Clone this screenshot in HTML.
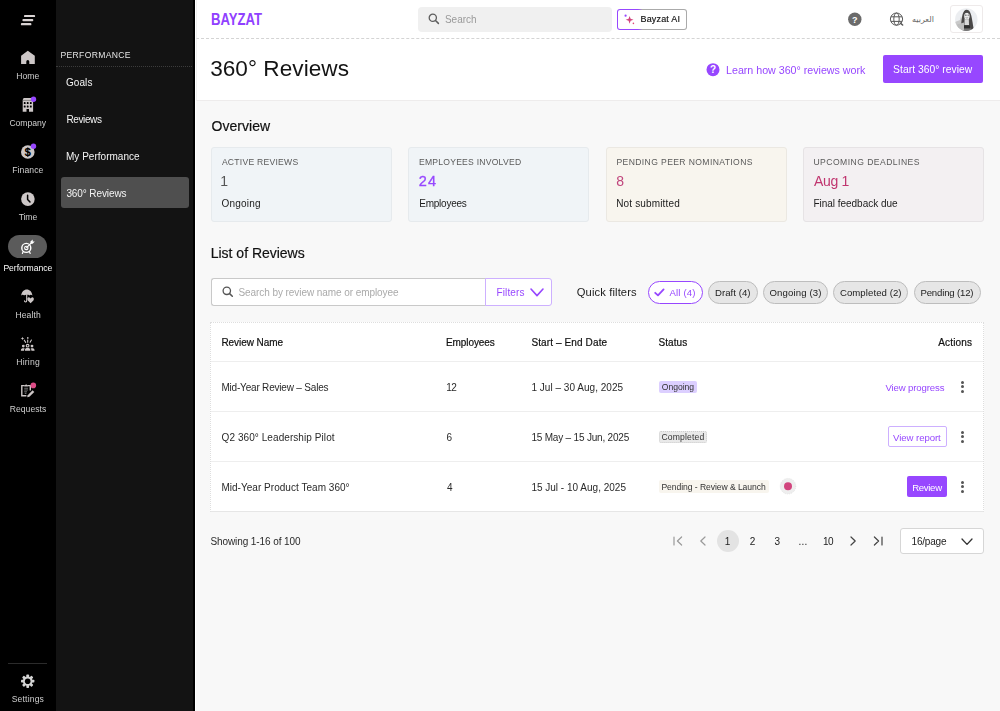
<!DOCTYPE html>
<html lang="en">
<head>
<meta charset="utf-8">
<title>360° Reviews</title>
<style>
*{box-sizing:border-box;margin:0;padding:0}
html,body{width:1000px;height:711px;overflow:hidden;background:#fff}
body{font-family:"Liberation Sans","DejaVu Sans",sans-serif;color:#1c1c1c;position:relative;font-size:10px}
.t{position:absolute;white-space:nowrap;line-height:1}
.b{position:absolute}
#txt{position:absolute;left:0;top:0;width:1000px;height:711px;will-change:transform}
svg{display:block;position:absolute;overflow:visible}
#rail{position:absolute;left:0;top:0;width:56px;height:711px;background:#000}
#pill{position:absolute;left:8px;top:235px;width:39px;height:23px;border-radius:12px;background:#5b5b5b}
#sub{position:absolute;left:56px;top:0;width:138px;height:711px;background:#131313}
#sub .dl{position:absolute;left:0;top:66px;width:138px;border-top:1px dotted #3c3c3c}
#sub .sel{position:absolute;left:5px;top:177px;width:128px;height:31px;background:#4f4f4f;border-radius:3px}
#shadow{position:absolute;left:193px;top:0;width:1.5px;height:711px;background:#000}
#content{position:absolute;left:196px;top:101px;width:804px;height:610px;background:#f8f8f8}
#top{position:absolute;left:196px;top:0;width:804px;height:39px;background:#fff;border-bottom:1px dashed #d4d4d4;border-left:1px solid #f0f0f0}
#hdr{position:absolute;left:196px;top:39px;width:804px;height:62px;background:#fff;border-bottom:1px solid #eeecec;border-left:1px solid #f0f0f0}
#gsearch{position:absolute;left:418px;top:7px;width:194px;height:25px;background:#f0f0f0;border-radius:4px}
#ai{position:absolute;left:617px;top:9px;width:70px;height:21px;border-radius:3px;background:linear-gradient(90deg,#9747ff 0,#9747ff 30%,#aaa 36%,#aaa 100%)}
#ai i{position:absolute;left:1px;top:1px;right:1px;bottom:1px;background:#fff;border-radius:2px}
#avatar{position:absolute;left:950px;top:5px;width:33px;height:28px;border:1px solid #eeeaea;border-radius:3px;background:#fff}
#startbtn{position:absolute;left:883px;top:55px;width:100px;height:28px;background:#9747ff;border-radius:2px}
.card{position:absolute;top:147px;width:181px;height:75px;border:1px solid #e6eaed;border-radius:3px;background:#f0f4f7}
#lsearch{position:absolute;left:211px;top:278px;width:275px;height:28px;border:1px solid #c9c9c9;border-right:none;border-radius:3px 0 0 3px;background:#fff}
#filters{position:absolute;left:485px;top:278px;width:67px;height:28px;border:1px solid #cdb0ff;border-radius:0 3px 3px 0;background:#fff}
.chip{position:absolute;top:281px;height:23px;border-radius:12px;border:1px solid #bdbdbd;background:#e6e6e6}
.chip.on{border-color:#9747ff;background:#fff}
#tbl{position:absolute;left:210px;top:322px;width:774px;height:190px;background:#fff;border:1px dotted #dedede;border-bottom:1px solid #e6e6e6}
#tbl .hl{position:absolute;left:0;width:772px;height:1px;background:#eeeeee}
.badge{position:absolute;border-radius:2px}
.kebab{position:absolute;left:961px;width:3px;height:13px;margin-top:-.5px}
.kebab i{position:absolute;left:-.1px;width:3.2px;height:3.2px;border-radius:50%;background:#555}
#psel{position:absolute;left:900px;top:528px;width:84px;height:26px;border:1px solid #d6d6d6;border-radius:3px;background:#fff}
</style>
</head>
<body>
<!-- ICON RAIL -->
<div id="rail">
  <div id="pill"></div>
  <svg style="left:0;top:0" width="56" height="711" viewBox="0 0 56 711">
    <g fill="#dad4d4"><rect x="24" y="14.9" width="11.1" height="2.2" rx=".9"/><rect x="22.4" y="19" width="10.9" height="2.2" rx=".9"/><rect x="20.9" y="23" width="10.5" height="2.3" rx=".9"/></g>
    <path d="M27.8 50.8L34.8 55.7V64.1H29.3V61.6Q29.3 60 27.8 60Q26.3 60 26.3 61.6V64.1H21.1V55.7Z" fill="#cdc7c7"/>
    <g><path d="M23.6 98H31.9L33.1 100V111.7H22.7V100Z" fill="#cdc7c7"/><path d="M22.7 100.4H33.1" stroke="#444" stroke-width=".5"/><g fill="#000"><rect x="23.8" y="102.1" width="1.8" height="2" rx=".6"/><rect x="26.8" y="102.1" width="1.8" height="2" rx=".6"/><rect x="29.9" y="102.1" width="1.8" height="2" rx=".6"/><rect x="23.8" y="105.5" width="1.8" height="2" rx=".6"/><rect x="26.8" y="105.5" width="1.8" height="2" rx=".6"/><rect x="29.9" y="105.5" width="1.8" height="2" rx=".6"/><rect x="26.5" y="109" width="2.5" height="3"/></g></g>
    <circle cx="33.5" cy="99.3" r="2.7" fill="#9747ff"/>
    <circle cx="27.8" cy="152" r="6.8" fill="#cdc7c7"/>
    <text x="27.8" y="156.2" font-size="11.5" font-weight="bold" text-anchor="middle" fill="#000" font-family="Liberation Sans, sans-serif">$</text>
    <path d="M27.8 147.3V156.7" stroke="#000" stroke-width=".9"/>
    <circle cx="33.5" cy="146.3" r="2.7" fill="#9747ff"/>
    <circle cx="27.9" cy="199.1" r="6.8" fill="#cdc7c7"/>
    <path d="M27.6 195.2V199.4L30 202" fill="none" stroke="#000" stroke-width="1.5" stroke-linecap="round" stroke-linejoin="round"/>
    <g fill="none" stroke="#fff"><circle cx="26.3" cy="247.9" r="4.5" stroke-width="1.4"/><circle cx="26.3" cy="247.9" r="1.7" stroke-width="1.1"/><path d="M26.3 247.9L31.6 242.6" stroke-width="1.2"/><path d="M23.2 251.6L22.4 253.4M29.4 251.6L30.2 253.4" stroke-width="1.2" stroke-linecap="round"/></g>
    <path d="M30.4 241.6L32.8 239.4L32.7 241.5L34.8 241.4L32.6 243.8L30.6 243.7Z" fill="#fff"/>
    <g><path d="M21.2 295.4C21.6 291.6 24 289.4 26.8 289.4C29.6 289.4 32 291.6 32.4 295.4C31.4 294.6 30.2 294.6 29.4 295.4C28.6 294.6 25 294.6 24.2 295.4C23.4 294.6 22.2 294.6 21.2 295.4Z" fill="#cdc7c7"/><path d="M26.7 294.5V300.6C26.7 302.4 24.5 302.4 24.5 300.8" fill="none" stroke="#cdc7c7" stroke-width="1.1" stroke-linecap="round"/><path d="M30.6 303.2L27.8 300.4C26.6 299 27.8 297 29.4 297.4C30 297.6 30.4 298 30.6 298.4C30.8 298 31.2 297.6 31.8 297.4C33.4 297 34.6 299 33.4 300.4Z" fill="#cdc7c7"/></g>
    <g fill="#cdc7c7"><circle cx="27.6" cy="345.7" r="1.9"/><path d="M24.9 350.8V349.9C24.9 348.6 26 348 27.6 348C29.2 348 30.3 348.6 30.3 349.9V350.8Z"/><circle cx="23.3" cy="346.1" r="1.4"/><path d="M20.9 350.8V350.2C20.9 348.9 21.9 348.3 23.3 348.3C23.9 348.3 24.4 348.4 24.8 348.7C24.2 349.1 24 349.6 24 350.2V350.8Z"/><circle cx="32" cy="346.1" r="1.4"/><path d="M34.5 350.8V350.2C34.5 348.9 33.5 348.3 32.1 348.3C31.5 348.3 31 348.4 30.6 348.7C31.2 349.1 31.4 349.6 31.4 350.2V350.8Z"/><path d="M22.5 336.7L23 338L24.3 338.5L23 339L22.5 340.3L22 339L20.7 338.5L22 338Z"/><rect x="27" y="337.2" width="1.5" height="1.5"/></g>
    <circle cx="27.6" cy="345.7" r=".8" fill="#000"/>
    <g stroke="#cdc7c7" stroke-width="1.1" stroke-linecap="round"><path d="M27.7 340V342.2"/><path d="M31.4 340L30.1 342.2"/><path d="M24.3 340.2L25.7 342.4"/></g>
    <g><path d="M24.6 385.6H21.8V395.7H26.4M27.6 385.6H30.3V390.4" fill="none" stroke="#cdc7c7" stroke-width="1.4"/><path d="M24.4 386.4V384.9H25.4L26.1 384.1L26.8 384.9H27.8V386.4Z" fill="#cdc7c7"/><path d="M24.2 388.2H28M24.2 390H28M24.2 391.8H27M24.8 393.4H26.4" stroke="#6e6e6e" stroke-width="1.1"/><path d="M27.2 397.2L27.7 395.2L32.6 390.3L34.3 392L29.4 396.8Z" fill="#cdc7c7"/></g>
    <circle cx="33.3" cy="385.4" r="2.8" fill="#dd4b86"/>
    <rect x="8" y="663" width="39" height="1" fill="#2b2b2b"/>
    <g transform="translate(27.7 681.2)"><g fill="#d4d4d4"><rect x="-1.35" y="-6.7" width="2.7" height="13.4" rx=".7"/><rect x="-1.35" y="-6.7" width="2.7" height="13.4" rx=".7" transform="rotate(45)"/><rect x="-1.35" y="-6.7" width="2.7" height="13.4" rx=".7" transform="rotate(90)"/><rect x="-1.35" y="-6.7" width="2.7" height="13.4" rx=".7" transform="rotate(135)"/><circle r="4.8"/></g><circle r="2.8" fill="#000"/></g>
  </svg>
</div>
<!-- SUB NAV -->
<div id="sub"><div class="dl"></div><div class="sel"></div></div>
<div id="shadow"></div>
<div id="content"></div>
<!-- TOP BAR -->
<div id="top"></div>
<svg style="left:211px;top:13px" width="52" height="13" viewBox="0 0 52 13"><text x="0" y="11.9" font-family="Liberation Sans, sans-serif" font-weight="bold" font-size="16" fill="#9040ff" textLength="51" lengthAdjust="spacingAndGlyphs">BAYZAT</text></svg>
<div id="gsearch"></div>
<svg style="left:428px;top:13px" width="12" height="12" viewBox="0 0 12 12"><circle cx="4.8" cy="4.8" r="3.6" fill="none" stroke="#5e5e5e" stroke-width="1.3"/><path d="M7.5 7.5L10.4 10.4" stroke="#5e5e5e" stroke-width="1.5" stroke-linecap="round"/></svg>
<div id="ai"><i></i></div>
<svg style="left:624px;top:13px" width="12" height="12" viewBox="0 0 12 12"><path d="M5.6 2.9L6.6 5.8L9.5 6.8L6.6 7.8L5.6 10.7L4.6 7.8L1.7 6.8L4.6 5.8Z" fill="#d1457e"/><circle cx="1.6" cy="2.7" r="1.1" fill="#9747ff"/><circle cx="9.4" cy="10.4" r=".8" fill="#e0457b"/></svg>
<svg style="left:848px;top:12px" width="14" height="14" viewBox="0 0 14 14"><circle cx="6.8" cy="7.2" r="6.7" fill="#6a6a6a"/><text x="6.8" y="10.5" font-size="9" font-weight="bold" text-anchor="middle" fill="#fff" font-family="Liberation Sans, sans-serif">?</text></svg>
<svg style="left:889px;top:12px" width="16" height="16" viewBox="0 0 16 16"><g fill="none" stroke="#585858" stroke-width="1"><circle cx="7.5" cy="7.1" r="6.1"/><ellipse cx="7.5" cy="7.1" rx="2.7" ry="6.1"/><path d="M2 4.8H13M2 9.4H13"/></g><path d="M11.4 11.2L13.6 13" stroke="#585858" stroke-width="1.6" stroke-linecap="round"/></svg>
<div class="t" style="left:912px;top:14.5px;font-size:8px;color:#666;font-family:'DejaVu Sans',sans-serif;line-height:10px" dir="rtl" lang="ar">العربيه</div>
<div id="avatar"></div>
<svg style="left:955px;top:8px" width="23" height="23" viewBox="0 0 23 23"><defs><clipPath id="ac"><circle cx="11.3" cy="11.5" r="11.2"/></clipPath></defs><g clip-path="url(#ac)"><rect width="23" height="23" fill="#eceef1"/><path d="M0 14L5 12L6 8L7 13L9 12V23H0Z" fill="#c9c9c9"/><path d="M6.2 17C6.6 9 7.8 1.8 11.6 1.8C15.6 1.8 16.6 8 17.6 14.5C18 17.6 18.6 20 19 23H7Z" fill="#4a4848"/><ellipse cx="11.9" cy="8.2" rx="2.7" ry="3.6" fill="#ececec"/><path d="M9.6 10.5C10.4 12 13.2 12 13.8 10.4L14 17H9.4Z" fill="#d9d9d9"/><path d="M9.2 7C9.8 4.4 12.6 3.6 14.6 6.6C14 4 13 3 11.6 3C10 3 9.4 5 9.2 7Z" fill="#4a4848"/><rect x="10.2" y="6.6" width="1.3" height="1.2" rx=".5" fill="#444"/><rect x="12.6" y="6.6" width="1.2" height="1.2" rx=".5" fill="#555"/><path d="M10.6 9.6Q12 10.6 13.2 9.5" stroke="#777" stroke-width=".6" fill="none"/><path d="M8.4 17.6H15V20.4H8.4Z" fill="#2e2e2e"/><path d="M7.5 20.4H16V23H7.5Z" fill="#777"/><path d="M2 16.5L9 14.5V23H3Z" fill="#bdbdbd"/></g></svg>
<!-- HEADER -->
<div id="hdr"></div>
<svg style="left:706px;top:63px" width="14" height="14" viewBox="0 0 14 14"><circle cx="7" cy="6.7" r="6.5" fill="#9747ff"/><text x="7" y="10.3" font-size="10" font-weight="bold" text-anchor="middle" fill="#fff" font-family="Liberation Sans, sans-serif">?</text></svg>
<div id="startbtn"></div>
<!-- OVERVIEW -->
<div class="card" style="left:211px"></div>
<div class="card" style="left:408px"></div>
<div class="card" style="left:606px;background:#f8f5ee;border-color:#ebe8e2"></div>
<div class="card" style="left:803px;background:#f3f0f2;border-color:#e6e3e5"></div>
<!-- LIST -->
<div id="lsearch"></div>
<svg style="left:222px;top:286px" width="12" height="12" viewBox="0 0 12 12"><circle cx="4.8" cy="4.8" r="3.7" fill="none" stroke="#555" stroke-width="1.3"/><path d="M7.6 7.6L10.3 10.3" stroke="#555" stroke-width="1.5" stroke-linecap="round"/></svg>
<div id="filters"></div>
<svg style="left:530px;top:288px" width="14" height="9" viewBox="0 0 14 9"><path d="M1 1L7 7.6L13 1" fill="none" stroke="#9747ff" stroke-width="1.6" stroke-linecap="round" stroke-linejoin="round"/></svg>
<div class="chip on" style="left:648px;width:55px"></div>
<svg style="left:654px;top:288px" width="11" height="9" viewBox="0 0 11 9"><path d="M1.2 4.8L4 7.4L9.6 1.4" fill="none" stroke="#9747ff" stroke-width="1.8" stroke-linecap="round" stroke-linejoin="round"/></svg>
<div class="chip" style="left:708px;width:50px"></div>
<div class="chip" style="left:763px;width:65px"></div>
<div class="chip" style="left:833px;width:75px"></div>
<div class="chip" style="left:914px;width:67px"></div>
<!-- TABLE -->
<div id="tbl"><div class="hl" style="top:38px"></div><div class="hl" style="top:88px"></div><div class="hl" style="top:138px"></div></div>
<div class="badge" style="left:659px;top:381px;width:38px;height:12px;background:#dccfff"></div>
<div class="kebab" style="top:381px"><i style="top:0"></i><i style="top:4.5px"></i><i style="top:9px"></i></div>
<div class="badge" style="left:659px;top:431px;width:48px;height:12px;background:#e9e9e9;border:1px dotted #cfcfcf"></div>
<div class="b" style="left:888px;top:426px;width:59px;height:21px;border:1px solid #cdb0ff;border-radius:2px;background:#fff"></div>
<div class="kebab" style="top:431px"><i style="top:0"></i><i style="top:4.5px"></i><i style="top:9px"></i></div>
<div class="badge" style="left:659px;top:480px;width:110px;height:13px;background:#f8f5ee"></div>
<svg style="left:780px;top:478px" width="16" height="16" viewBox="0 0 16 16"><circle cx="8" cy="8.2" r="7.8" fill="#eeeeee" stroke="#d8d8d8" stroke-width=".6" stroke-dasharray="1 1"/><circle cx="8" cy="8.2" r="4" fill="#d1457e"/></svg>
<div class="b" style="left:907px;top:476px;width:40px;height:21px;border-radius:2px;background:#9747ff"></div>
<div class="kebab" style="top:481px"><i style="top:0"></i><i style="top:4.5px"></i><i style="top:9px"></i></div>
<!-- PAGINATION -->
<svg style="left:673px;top:536px" width="10" height="10" viewBox="0 0 10 10"><path d="M1 1V9M8.6 1L4.4 5L8.6 9" fill="none" stroke="#9a9a9a" stroke-width="1.2" stroke-linecap="round" stroke-linejoin="round"/></svg>
<svg style="left:699px;top:536px" width="8" height="10" viewBox="0 0 8 10"><path d="M6 1L1.8 5L6 9" fill="none" stroke="#9a9a9a" stroke-width="1.2" stroke-linecap="round" stroke-linejoin="round"/></svg>
<div class="b" style="left:717px;top:530px;width:22px;height:22px;border-radius:50%;background:#e3e3e3"></div>
<svg style="left:849px;top:536px" width="8" height="10" viewBox="0 0 8 10"><path d="M2 1L6.2 5L2 9" fill="none" stroke="#444" stroke-width="1.2" stroke-linecap="round" stroke-linejoin="round"/></svg>
<svg style="left:873px;top:536px" width="10" height="10" viewBox="0 0 10 10"><path d="M9 1V9M1.4 1L5.6 5L1.4 9" fill="none" stroke="#444" stroke-width="1.2" stroke-linecap="round" stroke-linejoin="round"/></svg>
<div id="psel"></div>
<svg style="left:961px;top:538px" width="12" height="8" viewBox="0 0 12 8"><path d="M1 1L6 6.4L11 1" fill="none" stroke="#333" stroke-width="1.3" stroke-linecap="round" stroke-linejoin="round"/></svg>
<!-- TEXT LAYER -->
<div id="txt">
<div class="t" id="r1" style="left:16.18px;top:72.32px;font-size:8.6px;letter-spacing:0.098px;color:#cfcfcf">Home</div>
<div class="t" id="r2" style="left:9.38px;top:119.32px;font-size:8.6px;letter-spacing:-0.025px;color:#cfcfcf">Company</div>
<div class="t" id="r3" style="left:12.28px;top:166.32px;font-size:8.6px;letter-spacing:0.092px;color:#cfcfcf">Finance</div>
<div class="t" id="r4" style="left:18.68px;top:213.32px;font-size:8.6px;letter-spacing:-0.083px;color:#cfcfcf">Time</div>
<div class="t" id="r5" style="left:3.38px;top:263.72px;font-size:8.6px;letter-spacing:-0.037px;color:#fff">Performance</div>
<div class="t" id="r6" style="left:15.38px;top:311.22px;font-size:8.6px;letter-spacing:0.098px;color:#cfcfcf">Health</div>
<div class="t" id="r7" style="left:16.28px;top:358.22px;font-size:8.6px;letter-spacing:0.196px;color:#cfcfcf">Hiring</div>
<div class="t" id="r8" style="left:9.68px;top:405.22px;font-size:8.6px;letter-spacing:0.046px;color:#cfcfcf">Requests</div>
<div class="t" id="r9" style="left:11.68px;top:695.22px;font-size:8.6px;letter-spacing:0.167px;color:#cfcfcf">Settings</div>
<div class="t" id="s0" style="left:60.48px;top:51.22px;font-size:8.6px;letter-spacing:0.317px;color:#e4e4e4">PERFORMANCE</div>
<div class="t" id="s1" style="left:66.00px;top:78.44px;font-size:10px;letter-spacing:0.069px;color:#f4f4f4">Goals</div>
<div class="t" id="s2" style="left:66.48px;top:115.13px;font-size:10px;letter-spacing:-0.383px;color:#f4f4f4">Reviews</div>
<div class="t" id="s3" style="left:66.00px;top:151.84px;font-size:10px;letter-spacing:0.019px;color:#f4f4f4">My Performance</div>
<div class="t" id="s4" style="left:66.40px;top:188.53px;font-size:10px;letter-spacing:-0.099px;color:#f4f4f4">360° Reviews</div>
<div class="t" id="g1" style="left:444.90px;top:15.23px;font-size:10px;letter-spacing:0.002px;color:#9a9a9a">Search</div>
<div class="t" id="g2" style="left:640.46px;top:14.98px;font-size:9px;letter-spacing:0.181px;color:#111;-webkit-text-stroke:.15px #111">Bayzat AI</div>
<div class="t" id="h1" style="left:210.14px;top:57.87px;font-size:22.6px;letter-spacing:0.039px;color:#141414">360° Reviews</div>
<div class="t" id="h2" style="left:726.06px;top:64.64px;font-size:10.7px;letter-spacing:-0.017px;color:#9747ff">Learn how 360° reviews work</div>
<div class="t" id="h3" style="left:893.08px;top:65.08px;font-size:10.3px;letter-spacing:0.044px;color:#fff">Start 360° review</div>
<div class="t" id="o0" style="left:211.48px;top:119.15px;font-size:14px;letter-spacing:0.059px;color:#111;-webkit-text-stroke:.2px #111">Overview</div>
<div class="t" id="c1k" style="left:221.88px;top:158.22px;font-size:8.6px;letter-spacing:0.251px;color:#5a5a5a">ACTIVE REVIEWS</div>
<div class="t" id="c1v" style="left:220.16px;top:174.25px;font-size:14px;letter-spacing:0.000px;color:#555">1</div>
<div class="t" id="c1s" style="left:221.40px;top:198.63px;font-size:10px;letter-spacing:0.231px;color:#1c1c1c">Ongoing</div>
<div class="t" id="c2k" style="left:418.98px;top:158.22px;font-size:8.6px;letter-spacing:0.229px;color:#5a5a5a">EMPLOYEES INVOLVED</div>
<div class="t" id="c2v" style="left:418.63px;top:173.83px;font-size:14.5px;letter-spacing:1.199px;color:#9747ff;-webkit-text-stroke:.3px #9747ff">24</div>
<div class="t" id="c2s" style="left:419.30px;top:198.63px;font-size:10px;letter-spacing:-0.246px;color:#1c1c1c">Employees</div>
<div class="t" id="c3k" style="left:616.48px;top:158.22px;font-size:8.6px;letter-spacing:0.378px;color:#5a5a5a">PENDING PEER NOMINATIONS</div>
<div class="t" id="c3v" style="left:616.16px;top:174.25px;font-size:14px;letter-spacing:0.000px;color:#c0457c">8</div>
<div class="t" id="c3s" style="left:616.20px;top:198.63px;font-size:10px;letter-spacing:0.158px;color:#1c1c1c">Not submitted</div>
<div class="t" id="c4k" style="left:813.48px;top:158.22px;font-size:8.6px;letter-spacing:0.450px;color:#5a5a5a">UPCOMING DEADLINES</div>
<div class="t" id="c4v" style="left:813.96px;top:174.25px;font-size:14px;letter-spacing:-0.328px;color:#c0356f">Aug 1</div>
<div class="t" id="c4s" style="left:813.40px;top:198.63px;font-size:10px;letter-spacing:-0.019px;color:#1c1c1c">Final feedback due</div>
<div class="t" id="l0" style="left:210.76px;top:246.15px;font-size:14px;letter-spacing:-0.014px;color:#111;-webkit-text-stroke:.2px #111">List of Reviews</div>
<div class="t" id="l1" style="left:238.40px;top:288.04px;font-size:10px;letter-spacing:-0.066px;color:#aaa">Search by review name or employee</div>
<div class="t" id="l2" style="left:496.40px;top:287.74px;font-size:10px;letter-spacing:0.161px;color:#9747ff">Filters</div>
<div class="t" id="l3" style="left:576.73px;top:286.72px;font-size:11.2px;letter-spacing:0.126px;color:#1c1c1c">Quick filters</div>
<div class="t" id="q1" style="left:669.42px;top:288.37px;font-size:9.6px;letter-spacing:0.182px;color:#9747ff">All (4)</div>
<div class="t" id="q2" style="left:714.92px;top:288.37px;font-size:9.6px;letter-spacing:0.058px;color:#222">Draft (4)</div>
<div class="t" id="q3" style="left:769.42px;top:288.37px;font-size:9.6px;letter-spacing:0.148px;color:#222">Ongoing (3)</div>
<div class="t" id="q4" style="left:839.92px;top:288.37px;font-size:9.6px;letter-spacing:0.071px;color:#222">Completed (2)</div>
<div class="t" id="q5" style="left:920.42px;top:288.37px;font-size:9.6px;letter-spacing:-0.162px;color:#222">Pending (12)</div>
<div class="t" id="th1" style="left:221.40px;top:337.54px;font-size:10px;letter-spacing:-0.055px;color:#111;-webkit-text-stroke:.2px #111">Review Name</div>
<div class="t" id="th2" style="left:446.00px;top:337.54px;font-size:10px;letter-spacing:-0.084px;color:#111;-webkit-text-stroke:.2px #111">Employees</div>
<div class="t" id="th3" style="left:531.40px;top:337.54px;font-size:10px;letter-spacing:0.118px;color:#111;-webkit-text-stroke:.2px #111">Start – End Date</div>
<div class="t" id="th4" style="left:658.40px;top:337.54px;font-size:10px;letter-spacing:0.088px;color:#111;-webkit-text-stroke:.2px #111">Status</div>
<div class="t" id="th5" style="left:938.20px;top:337.54px;font-size:10px;letter-spacing:0.167px;color:#111;-webkit-text-stroke:.2px #111">Actions</div>
<div class="t" id="a1" style="left:221.40px;top:382.74px;font-size:10px;letter-spacing:-0.189px;color:#2a2a2a">Mid-Year Review – Sales</div>
<div class="t" id="a2" style="left:446.20px;top:382.74px;font-size:10px;letter-spacing:-0.525px;color:#2a2a2a">12</div>
<div class="t" id="a3" style="left:531.40px;top:382.74px;font-size:10px;letter-spacing:0.027px;color:#2a2a2a">1 Jul – 30 Aug, 2025</div>
<div class="t" id="a4" style="left:661.78px;top:383.22px;font-size:8.6px;letter-spacing:-0.028px;color:#333">Ongoing</div>
<div class="t" id="a5" style="left:885.42px;top:382.67px;font-size:9.6px;letter-spacing:-0.123px;color:#9747ff">View progress</div>
<div class="t" id="b1" style="left:221.56px;top:432.74px;font-size:10px;letter-spacing:0.074px;color:#2a2a2a">Q2 360° Leadership Pilot</div>
<div class="t" id="b2" style="left:446.40px;top:432.74px;font-size:10px;letter-spacing:0.000px;color:#2a2a2a">6</div>
<div class="t" id="b3" style="left:531.40px;top:432.74px;font-size:10px;letter-spacing:-0.192px;color:#2a2a2a">15 May – 15 Jun, 2025</div>
<div class="t" id="b4" style="left:661.48px;top:433.22px;font-size:8.6px;letter-spacing:0.146px;color:#333">Completed</div>
<div class="t" id="b5" style="left:893.02px;top:432.67px;font-size:9.6px;letter-spacing:-0.059px;color:#9747ff">View report</div>
<div class="t" id="d1" style="left:221.40px;top:482.74px;font-size:10px;letter-spacing:0.032px;color:#2a2a2a">Mid-Year Product Team 360°</div>
<div class="t" id="d2" style="left:447.00px;top:482.74px;font-size:10px;letter-spacing:0.000px;color:#2a2a2a">4</div>
<div class="t" id="d3" style="left:531.40px;top:482.74px;font-size:10px;letter-spacing:0.003px;color:#2a2a2a">15 Jul - 10 Aug, 2025</div>
<div class="t" id="d4" style="left:661.48px;top:483.12px;font-size:8.6px;letter-spacing:-0.076px;color:#333">Pending - Review &amp; Launch</div>
<div class="t" id="d5" style="left:912.22px;top:482.67px;font-size:9.6px;letter-spacing:-0.323px;color:#fff">Review</div>
<div class="t" id="p0" style="left:210.40px;top:537.33px;font-size:10px;letter-spacing:-0.085px;color:#2a2a2a">Showing 1-16 of 100</div>
<div class="t" id="p1" style="left:724.76px;top:537.03px;font-size:10px;letter-spacing:0.000px;color:#222">1</div>
<div class="t" id="p2" style="left:749.70px;top:537.03px;font-size:10px;letter-spacing:0.000px;color:#222">2</div>
<div class="t" id="p3" style="left:774.60px;top:537.03px;font-size:10px;letter-spacing:0.000px;color:#222">3</div>
<div class="t" id="p4" style="left:798.50px;top:537.03px;font-size:10px;letter-spacing:0.278px;color:#222">...</div>
<div class="t" id="p5" style="left:822.90px;top:537.03px;font-size:10px;letter-spacing:-0.425px;color:#222">10</div>
<div class="t" id="p6" style="left:911.54px;top:537.03px;font-size:10px;letter-spacing:-0.194px;color:#222">16/page</div>
</div>
</body>
</html>
